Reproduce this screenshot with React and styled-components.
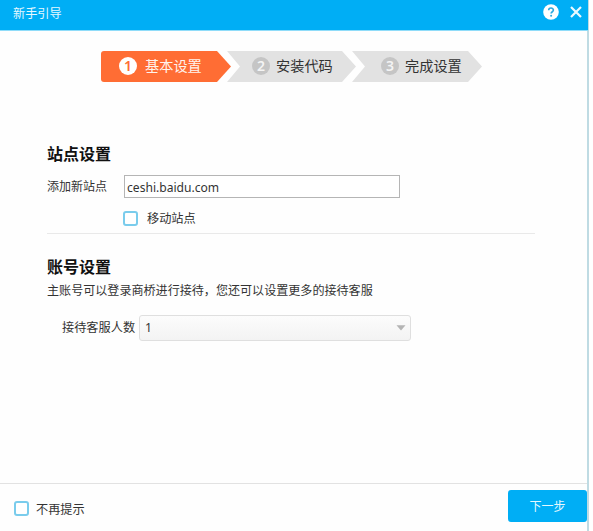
import React, { useState } from 'react'
import styled, { createGlobalStyle } from 'styled-components'

const STEPS = [
  { label: '基本设置', active: true, width: 130, indent: 18 },
  { label: '安装代码', width: 129, indent: 25 },
  { label: '完成设置', width: 130, indent: 29 },
]

const App = () => {
  const [mobile, setMobile] = useState(false)
  const [hide, setHide] = useState(false)

  return (
    <>
      <GlobalStyle />
      <Dialog>
        <TitleBar>
          <Title>新手引导</Title>
          <TitleButton aria-label="帮助">
            <HelpIcon />
          </TitleButton>
          <TitleButton aria-label="关闭">
            <CloseIcon />
          </TitleButton>
        </TitleBar>

        <Steps>
          {STEPS.map((step, i) => (
            <Step
              key={step.label}
              active={step.active}
              width={step.width}
              indent={step.indent}
              first={i === 0}
            >
              <StepNumber active={step.active}>{i + 1}</StepNumber>
              {step.label}
            </Step>
          ))}
        </Steps>

        <Body>
          <SiteSection>
            <Heading>站点设置</Heading>
            <SiteRow>
              <SiteLabel htmlFor="site">添加新站点</SiteLabel>
              <TextInput id="site" defaultValue="ceshi.baidu.com" />
            </SiteRow>
            <MobileRow>
              <Checkbox checked={mobile} onChange={() => setMobile(!mobile)} />
              <CheckLabel spacing={9}>移动站点</CheckLabel>
            </MobileRow>
          </SiteSection>

          <AccountSection>
            <Heading>账号设置</Heading>
            <Description>
              主账号可以登录商桥进行接待，您还可以设置更多的接待客服
            </Description>
            <CountRow>
              <CountLabel>接待客服人数</CountLabel>
              <Select type="button">
                1
                <Caret />
              </Select>
            </CountRow>
          </AccountSection>
        </Body>

        <Footer>
          <Checkbox checked={hide} onChange={() => setHide(!hide)} />
          <CheckLabel spacing={7}>不再提示</CheckLabel>
          <NextButton type="button">下一步</NextButton>
        </Footer>
      </Dialog>
    </>
  )
}

export default App

const HelpIcon = () => (
  <svg width="16" height="16" viewBox="0 0 16 16">
    <circle cx="8" cy="8" r="7.8" fill="#fff" />
    <path
      d="M5.7 6.3C5.7 3.3 10.4 3.4 10.4 6.1C10.4 7.8 8.1 7.7 8.1 9.6"
      fill="none"
      stroke="#2ba9df"
      strokeWidth="1.6"
    />
    <circle cx="8.1" cy="11.8" r="1" fill="#2ba9df" />
  </svg>
)

const CloseIcon = () => (
  <svg width="12" height="12" viewBox="0 0 12 12">
    <path d="M1 1L11 11M11 1L1 11" stroke="#e9f9ff" strokeWidth="2.2" />
  </svg>
)

const Caret = () => (
  <svg width="10" height="6" viewBox="0 0 10 6">
    <path d="M0.5 0.3H9.5L5 5.5Z" fill="#b4b4b4" />
  </svg>
)

const GlobalStyle = createGlobalStyle`
  * {
    box-sizing: border-box;
  }

  body {
    margin: 0;
    background: #fff;
    color: #333;
    font: 12px/16px 'Noto Sans', 'Noto Sans CJK SC', sans-serif;
  }

  button,
  input {
    font: inherit;
    color: inherit;
  }
`

const Dialog = styled.div`
  display: flex;
  flex-direction: column;
  width: 589px;
  height: 531px;
  border-right: 2px solid #bfdbe3;
  background: #fefefe;
`

const TitleBar = styled.header`
  display: flex;
  align-items: center;
  flex: none;
  height: 31px;
  margin-right: -1px;
  padding: 0 6px 6px 13px;
  border-bottom: 1px solid #8fdcf9;
  background: #00aef5;
`

const Title = styled.div`
  flex: 1;
  padding-top: 3px;
  color: #e5f8ff;
  font-size: 12.2px;
`

const TitleButton = styled.button`
  display: flex;
  margin-left: 11px;
  padding: 0;
  border: 0;
  background: none;
`

const Steps = styled.div`
  display: flex;
  flex: none;
  height: 31px;
  margin: 20px 0 0 101px;
`

const Step = styled.div.withConfig({
  shouldForwardProp: prop => !['active', 'width', 'indent', 'first'].includes(prop),
})`
  display: flex;
  align-items: center;
  width: ${p => p.width}px;
  margin-left: ${p => (p.first ? 0 : '-4px')};
  padding: 0 0 1px ${p => p.indent}px;
  border-radius: ${p => (p.first ? '3px 0 0 3px' : 0)};
  background: ${p => (p.active ? '#ff6d34' : '#e2e2e2')};
  color: ${p => (p.active ? '#fff3ec' : '#333')};
  font-size: 14.2px;
  clip-path: ${p =>
    p.first
      ? 'polygon(0 0, calc(100% - 14px) 0, 100% 50%, calc(100% - 14px) 100%, 0 100%)'
      : 'polygon(0 0, calc(100% - 14px) 0, 100% 50%, calc(100% - 14px) 100%, 0 100%, 13px 50%)'};
`

const StepNumber = styled.span.withConfig({
  shouldForwardProp: prop => prop !== 'active',
})`
  display: flex;
  align-items: center;
  justify-content: center;
  width: 18px;
  height: 18px;
  margin-right: ${p => (p.active ? '8px' : '6px')};
  border-radius: 50%;
  background: ${p => (p.active ? '#fff' : '#c5c5c5')};
  color: ${p => (p.active ? '#ff6d34' : '#f4f4f4')};
  font-size: 14px;
  font-weight: 600;
`

const Body = styled.main`
  flex: 1;
  padding: 61px 52px 0 47px;
`

const SiteSection = styled.section`
  height: 91px;
  border-bottom: 1px solid #e9e9e9;
`

const AccountSection = styled.section`
  padding-top: 22px;
`

const Heading = styled.h2`
  margin: 0;
  color: #111;
  font-size: 16px;
  font-weight: 700;
  line-height: 22px;
`

const SiteRow = styled.div`
  display: flex;
  align-items: center;
  margin-top: 10px;
`

const SiteLabel = styled.label`
  width: 77px;
  padding-top: 1px;
`

const TextInput = styled.input`
  width: 276px;
  height: 23px;
  padding: 1px 2px 0;
  border: 1px solid #b5b5b5;
  border-radius: 0;
  background: #fff;
  font-size: 12.1px;
  outline: none;
`

const MobileRow = styled.div`
  display: flex;
  align-items: center;
  margin: 11px 0 0 76px;
`

const Checkbox = styled.input.attrs({ type: 'checkbox' })`
  appearance: none;
  flex: none;
  width: 15px;
  height: 15px;
  margin: 0;
  border: 2px solid #7accec;
  border-radius: 3px;
  background: ${p => (p.checked ? '#7accec' : '#fff')};
`

const CheckLabel = styled.span.withConfig({
  shouldForwardProp: prop => prop !== 'spacing',
})`
  margin-left: ${p => p.spacing}px;
  padding-top: 2px;
  font-size: 12.2px;
`

const Description = styled.p`
  margin: 5px 0 0;
  font-size: 12.07px;
  line-height: 16px;
  white-space: nowrap;
`

const CountRow = styled.div`
  display: flex;
  align-items: center;
  margin: 16px 0 0 15px;
`

const CountLabel = styled.span`
  width: 77px;
  font-size: 12.2px;
`

const Select = styled.button`
  display: flex;
  align-items: center;
  justify-content: space-between;
  width: 272px;
  height: 26px;
  padding: 0 4px 0 5px;
  border: 1px solid #dfdfdf;
  border-radius: 3px;
  background: linear-gradient(#fcfcfc, #f3f3f3);
  font-size: 12.2px;
`

const Footer = styled.footer`
  display: flex;
  align-items: center;
  flex: none;
  height: 48px;
  padding: 2px 0 0 14px;
  border-top: 1px solid #e2e2e2;
`

const NextButton = styled.button`
  width: 79px;
  height: 32px;
  margin: -5px 0 0 auto;
  padding: 1px 0 0;
  border: 0;
  border-radius: 3px;
  background: #00aef5;
  color: #e5f8ff;
`
